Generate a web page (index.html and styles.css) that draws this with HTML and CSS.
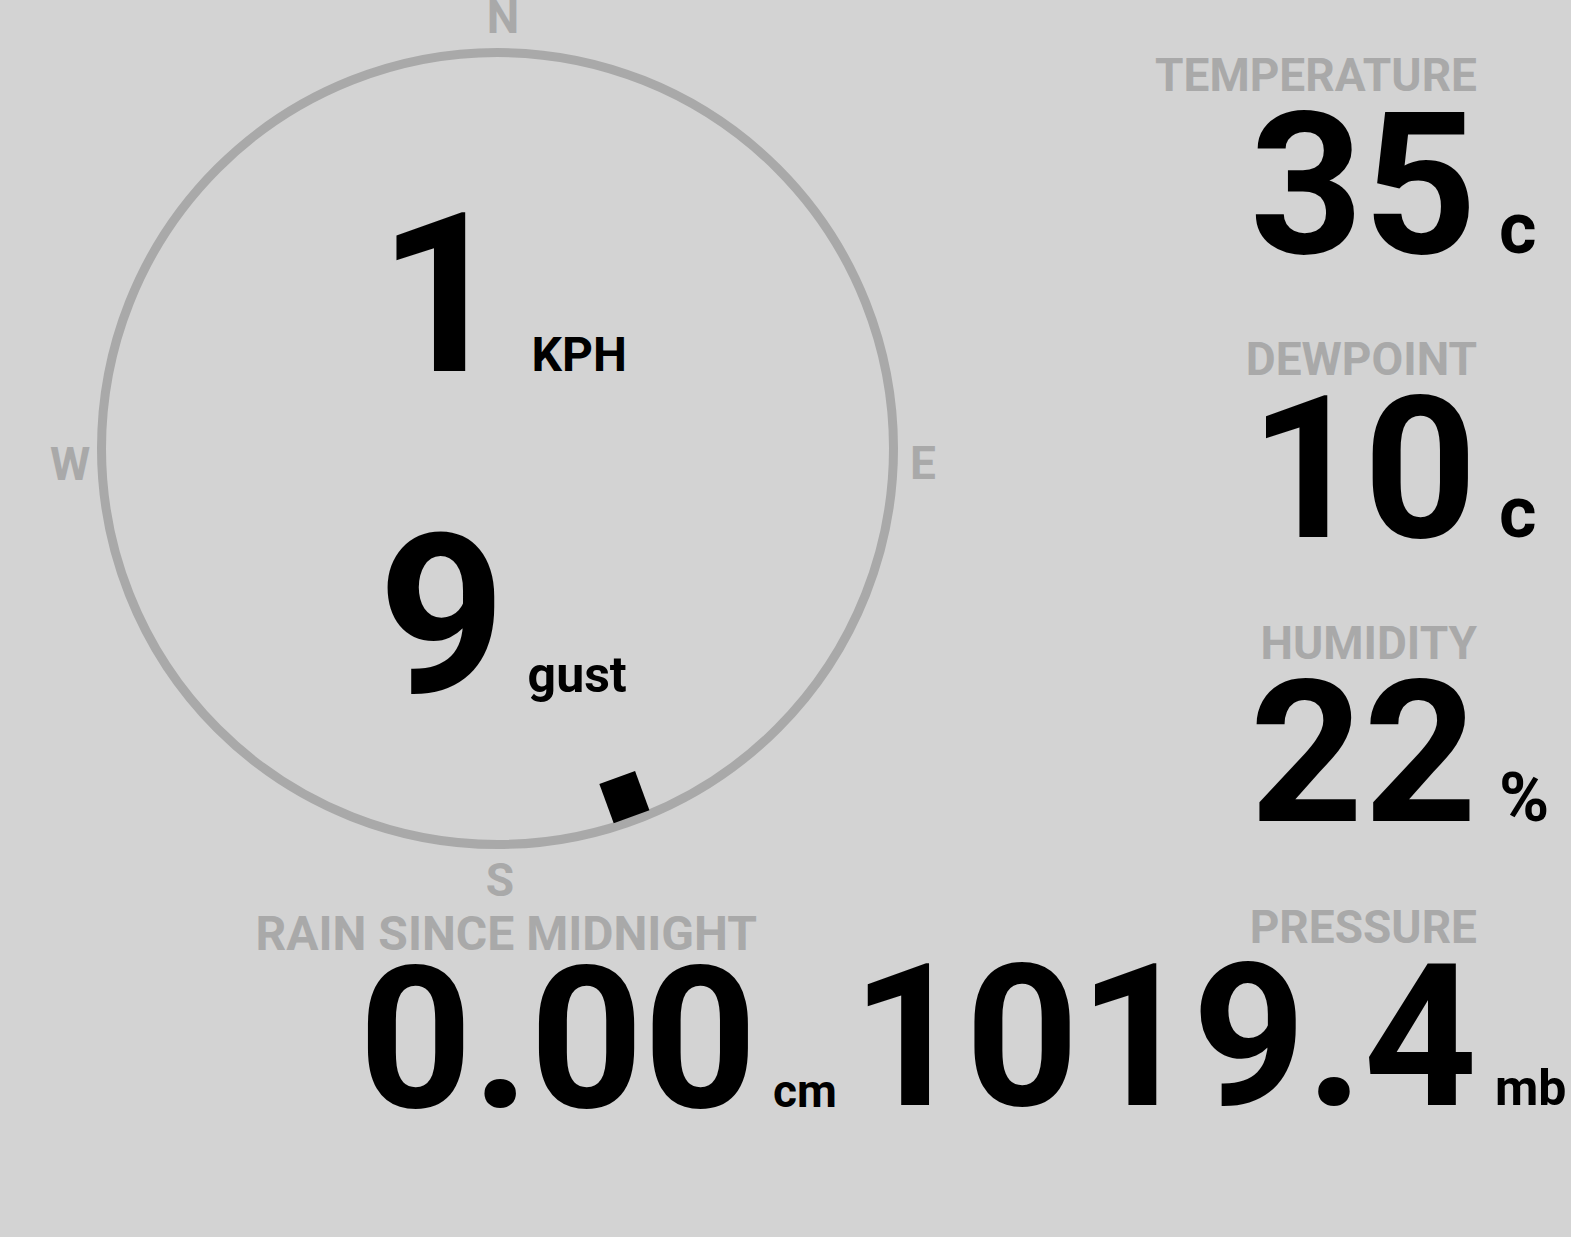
FILE: index.html
```
<!DOCTYPE html>
<html lang="en">
<head>
    <meta charset="UTF-8">
    <title>Weather</title>
    <link rel="stylesheet" href="styles.css">
</head>
<body>
<div class="dash">
    <div class="left">
        <div class="compass">
            <svg class="ring" width="995" height="911" viewBox="0 0 995 911">
                <circle cx="497.5" cy="448.5" r="396" fill="none" stroke="#a9a9a9" stroke-width="9"/>
                <!-- wind direction, 160deg -->
                <rect x="478.5" y="56.5" width="38" height="42" fill="#000" transform="rotate(160 497.5 448.5)"/>
            </svg>
            <span class="point point-n">N</span>
            <span class="point point-e">E</span>
            <span class="point point-s">S</span>
            <span class="point point-w">W</span>

            <div class="speed">
                <span class="speed-num">1</span>
                <span class="speed-unit">KPH</span>
            </div>
            <div class="speed speed-gust">
                <span class="speed-num">9</span>
                <span class="speed-unit gust">gust</span>
            </div>
        </div>

        <div class="reading rain">
            <div class="label">RAIN SINCE MIDNIGHT</div>
            <div class="value">
                <span class="num">0.00</span>
                <span class="unit unit-small">cm</span>
            </div>
        </div>
    </div>

    <div class="right">
        <div class="reading">
            <div class="label">TEMPERATURE</div>
            <div class="value">
                <span class="num">35</span>
                <span class="unit">c</span>
            </div>
        </div>
        <div class="reading">
            <div class="label">DEWPOINT</div>
            <div class="value">
                <span class="num">10</span>
                <span class="unit">c</span>
            </div>
        </div>
        <div class="reading">
            <div class="label">HUMIDITY</div>
            <div class="value">
                <span class="num">22</span>
                <span class="unit unit-pct">%</span>
            </div>
        </div>
        <div class="reading">
            <div class="label">PRESSURE</div>
            <div class="value">
                <span class="num">1019.4</span>
                <span class="unit unit-mb">mb</span>
            </div>
        </div>
    </div>
</div>
</body>
</html>
```

FILE: styles.css
```
* {
    margin: 0;
    padding: 0;
}

body {
    background-color: #d3d3d3;
    font-family: Roboto, "Liberation Sans", sans-serif;
    font-weight: 700;
    color: #000;
    overflow: hidden;
}

.dash {
    display: flex;
}

.left {
    width: 995px;
    flex: none;
    display: flex;
    flex-direction: column;
}

.right {
    flex: 1 1 0;
    min-width: 0;
    display: flex;
    flex-direction: column;
    align-items: flex-end;
    gap: 69px;
    padding: 52px 94px 0 0;
}

/* compass */
.compass {
    position: relative;
    width: 995px;
    height: 911px;
    padding-top: 165px;
    box-sizing: border-box;
}

.ring {
    position: absolute;
    left: 0;
    top: 0;
}

.point {
    position: absolute;
    font-size: 46px;
    line-height: 46px;
    color: #a9a9a9;
    transform: translateX(-50%);
}

.point-n {
    left: 503px;
    top: -6px;
}

.point-s {
    left: 500px;
    top: 857px;
}

.point-w {
    left: 70px;
    top: 441px;
}

.point-e {
    left: 923px;
    top: 440px;
}

.speed {
    position: relative;
    display: flex;
    justify-content: center;
    align-items: baseline;
    padding-left: 10px;
}

.speed-gust {
    margin-top: 61px;
}

.speed-num {
    font-size: 222px;
    line-height: 260px;
}

.speed-unit {
    font-size: 48px;
    line-height: 48px;
    margin-left: 26px;
}

.speed-unit.gust {
    font-size: 50px;
    margin-left: 22px;
}

/* readings */
.reading {
    display: flex;
    flex-direction: column;
    align-items: flex-end;
}

.rain {
    width: 757px;
}

.label {
    font-size: 46px;
    line-height: 46px;
    color: #a9a9a9;
    margin-bottom: 5px;
    white-space: nowrap;
}

.rain .label {
    font-size: 48px;
    margin-bottom: 0;
}

.value {
    display: flex;
    align-items: baseline;
}

.num {
    font-size: 198px;
    line-height: 164px;
    white-space: nowrap;
}

.unit {
    flex: none;
    width: 0;
    white-space: nowrap;
    text-indent: 22px;
    font-size: 72px;
    line-height: 72px;
}

.unit-pct {
    font-size: 68px;
}

.unit-small {
    font-size: 46px;
    line-height: 46px;
    text-indent: 16px;
}

.unit-mb {
    font-size: 50px;
    line-height: 50px;
    text-indent: 18px;
}
```
